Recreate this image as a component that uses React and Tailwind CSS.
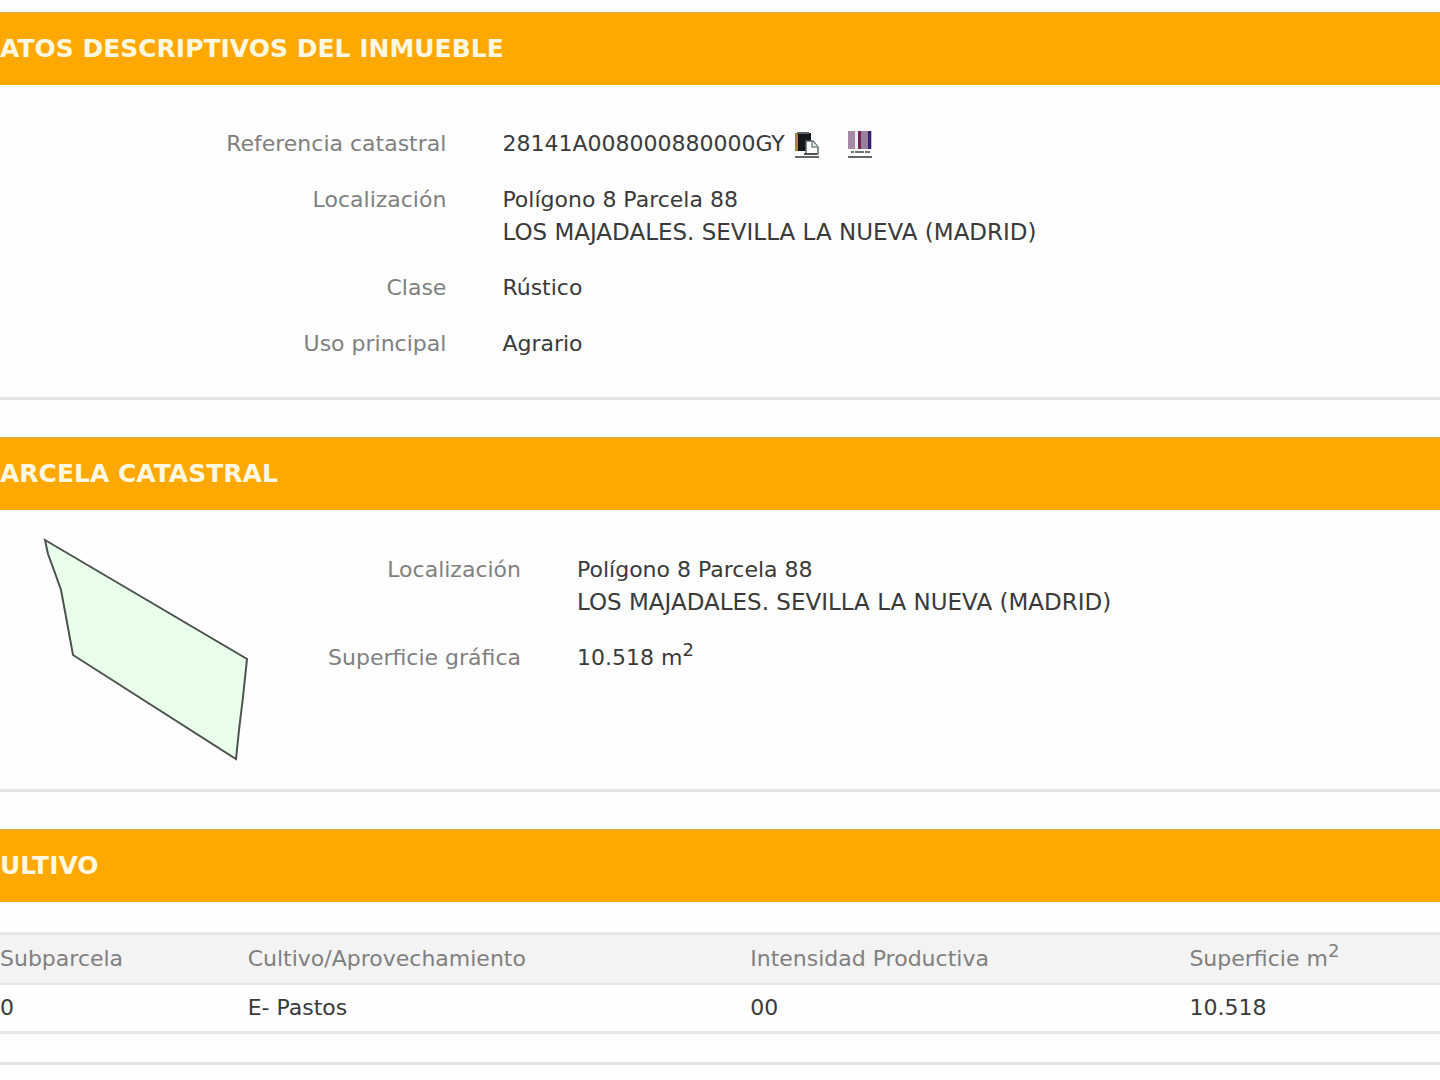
const CROPS = [{ id: "0", crop: "E- Pastos", intensity: "00", area: "10.518" }];

function CopyIcon() {
  return (
    <svg viewBox="0 0 26 28" className="h-7 w-[26px]" aria-hidden="true">
      <rect x="1" y="3" width="16" height="18" fill="#14181c" />
      <rect x="1" y="3" width="3" height="18" fill="#a88538" />
      <rect x="3" y="2" width="12" height="2" fill="#5b6068" />
      <path d="M12 11h7l5 6v7H12z" fill="#fff" stroke="#5b666c" strokeWidth="1.5" />
      <path d="M18 11v6h6" fill="#e6ecee" stroke="#7d888d" strokeWidth="1.5" />
      <path d="M10 24h13" stroke="#4c5357" strokeWidth="2" />
      <path d="M1 27h24" stroke="#333" strokeWidth="1.5" />
    </svg>
  );
}

function BarcodeIcon() {
  return (
    <svg viewBox="0 0 26 28" className="h-7 w-[26px]" aria-hidden="true">
      <rect x="1" y="1" width="24" height="18" fill="#cdb9ce" />
      <rect x="1" y="1" width="7" height="18" fill="#a58aa5" />
      <rect x="8" y="1" width="3" height="18" fill="#f1e8f1" />
      <rect x="11" y="1" width="3" height="18" fill="#762552" />
      <rect x="14" y="1" width="7" height="18" fill="#97809c" />
      <rect x="21" y="1" width="3" height="18" fill="#35226f" />
      <path d="M4 22h3M8 22h9M18 22h5" stroke="#444" strokeWidth="1.5" />
      <path d="M1 27h24" stroke="#333" strokeWidth="1.5" />
    </svg>
  );
}

function ParcelShape() {
  return (
    <svg viewBox="0 0 250 250" className="h-[250px] w-[250px]" role="img" aria-label="Parcela 88">
      <path
        d="M45 10L247 129L243 167L239 200L236 229L73 125L64 76L61 60L55 43L48 24Z"
        fill="#e9ffec"
        stroke="#4b534c"
        strokeWidth="2"
      />
    </svg>
  );
}

function Section({ title, children }) {
  return (
    <section className="mb-[37px] border-b-3 border-[#e4e4e4]">
      <h2 className="flex h-[73px] items-center border-t border-[#dcab55] bg-[#ffa800] text-[25px] font-bold whitespace-nowrap text-[#fff8e0]">
        {title}
      </h2>
      {children}
    </section>
  );
}

function Row({ label, labelWidth, children }) {
  return (
    <div className="flex gap-14">
      <dt className={`${labelWidth} shrink-0 text-right text-[#808080]`}>{label}</dt>
      <dd>{children}</dd>
    </div>
  );
}

function Location() {
  return (
    <>
      <div>Polígono 8 Parcela 88</div>
      <div className="text-[23px]">LOS MAJADALES. SEVILLA LA NUEVA (MADRID)</div>
    </>
  );
}

export default function App() {
  return (
    <main className="min-h-screen bg-[#fefefe] pt-3 font-['DejaVu_Sans',sans-serif] text-[22px] leading-8 text-[#3a3a3a]">
      <Section title="ATOS DESCRIPTIVOS DEL INMUEBLE">
        <dl className="flex flex-col gap-6 pt-[43px] pb-[37px]">
          <Row label="Referencia catastral" labelWidth="w-[31%]">
            <div className="flex items-center">
              <span>28141A008000880000GY</span>
              <button type="button" aria-label="Copiar referencia" className="ml-[9px]">
                <CopyIcon />
              </button>
              <button type="button" aria-label="Código de barras" className="ml-[27px]">
                <BarcodeIcon />
              </button>
            </div>
          </Row>
          <Row label="Localización" labelWidth="w-[31%]">
            <Location />
          </Row>
          <Row label="Clase" labelWidth="w-[31%]">Rústico</Row>
          <Row label="Uso principal" labelWidth="w-[31%]">Agrario</Row>
        </dl>
      </Section>

      <Section title="ARCELA CATASTRAL">
        <div className="flex pt-5 pb-[9px]">
          <ParcelShape />
          <dl className="flex flex-1 flex-col gap-6 pt-6">
            <Row label="Localización" labelWidth="w-[271px]">
              <Location />
            </Row>
            <Row label="Superficie gráfica" labelWidth="w-[271px]">
              10.518 m<sup className="text-lg leading-none">2</sup>
            </Row>
          </dl>
        </div>
      </Section>

      <Section title="ULTIVO">
        <table className="mt-[30px] mb-7 w-full table-fixed border-collapse text-left">
          <thead>
            <tr className="h-[50px] border-t-3 border-b-2 border-[#e6e6e6] bg-[#f3f3f3] text-[#808080]">
              <th className="w-[17.2%] font-normal">Subparcela</th>
              <th className="w-[34.9%] font-normal">Cultivo/Aprovechamiento</th>
              <th className="w-[30.5%] font-normal">Intensidad Productiva</th>
              <th className="font-normal">
                Superficie m<sup className="text-lg leading-none">2</sup>
              </th>
            </tr>
          </thead>
          <tbody>
            {CROPS.map((row) => (
              <tr key={row.id} className="h-[49px] border-b-3 border-[#e6e6e6]">
                <td>{row.id}</td>
                <td>{row.crop}</td>
                <td>{row.intensity}</td>
                <td>{row.area}</td>
              </tr>
            ))}
          </tbody>
        </table>
      </Section>
    </main>
  );
}
